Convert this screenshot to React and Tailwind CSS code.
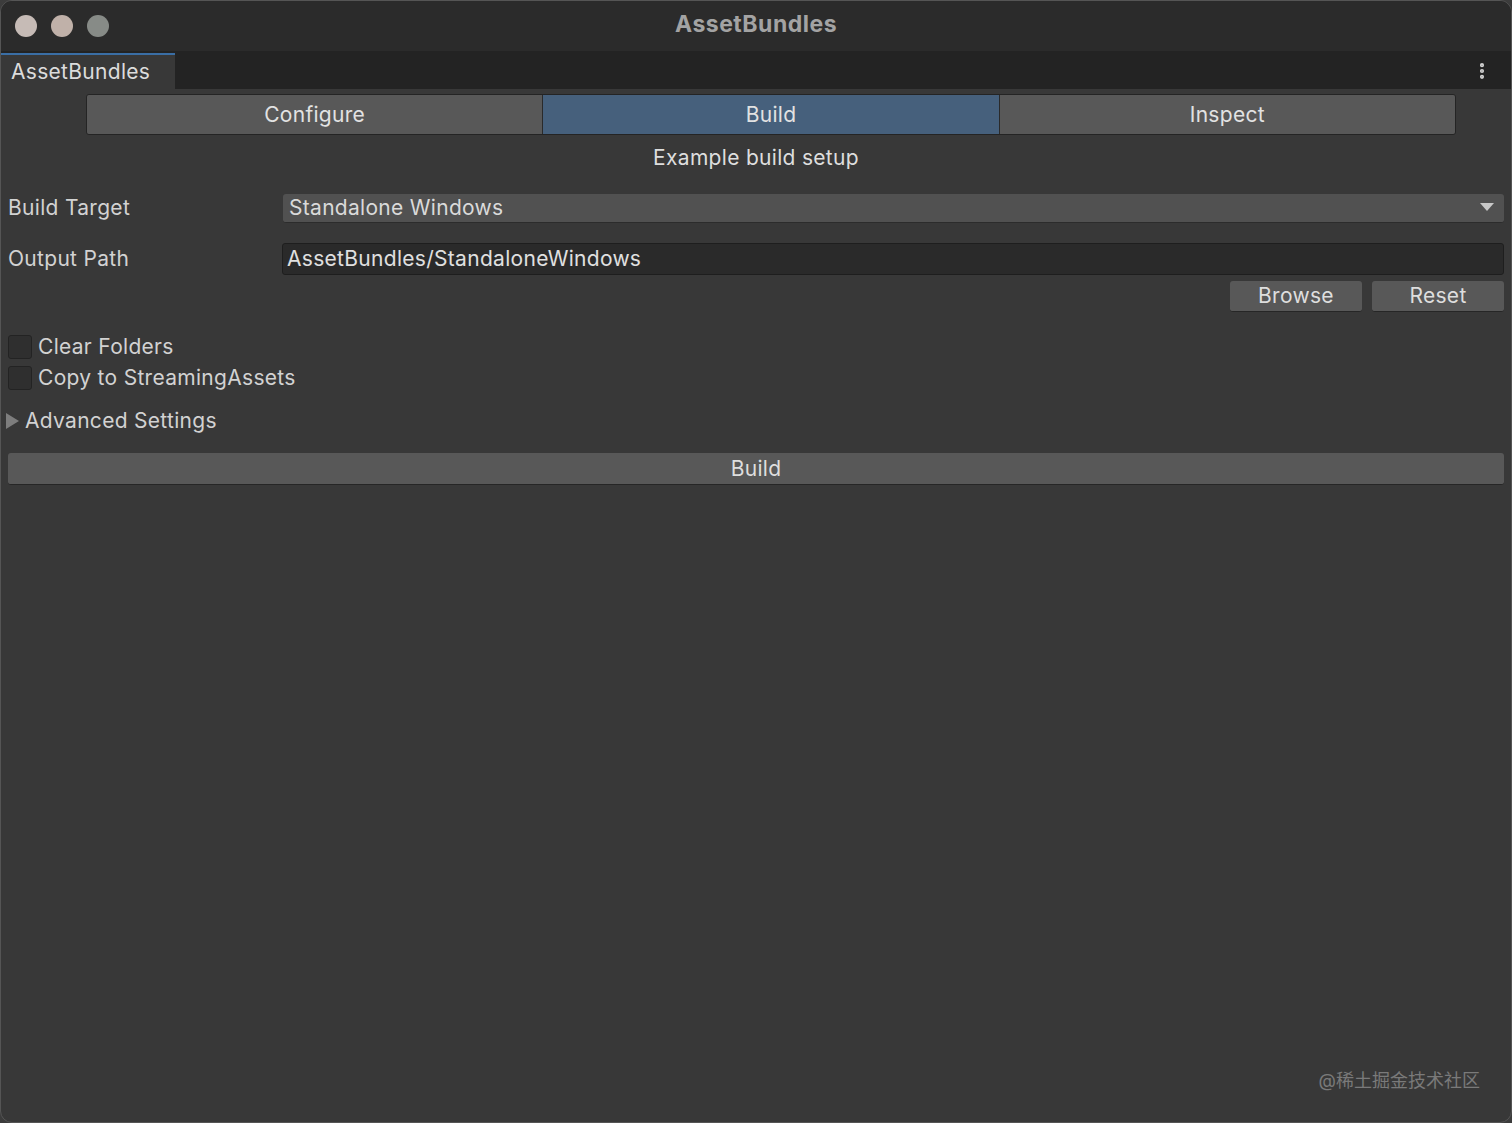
import { EllipsisVertical } from "lucide-react";

const tabs = ["Configure", "Build", "Inspect"];

const App = () => {
  return (
    <div
      className="h-[1123px] w-[1512px] overflow-hidden bg-[#3c3c3c]"
      style={{ fontFamily: "Inter, 'Noto Sans', sans-serif" }}
    >
      <div className="flex h-full flex-col overflow-hidden rounded-[12px] border border-[#555] bg-[#383838]">
        {/* title bar */}
        <div className="relative flex h-[50px] shrink-0 items-center bg-[#2b2b2b] px-[14px]">
          <div className="flex gap-[14px]">
            <span className="h-[22px] w-[22px] rounded-full bg-[#c6bbb6]" />
            <span className="h-[22px] w-[22px] rounded-full bg-[#c0b1a9]" />
            <span className="h-[22px] w-[22px] rounded-full bg-[#878b87]" />
          </div>
          <div className="absolute inset-0 flex items-center justify-center pb-[3px] text-[23px] font-bold tracking-[0.5px] text-[#a3a3a3]">
            AssetBundles
          </div>
        </div>

        {/* window tab strip */}
        <div className="flex h-[38px] shrink-0 items-stretch bg-[#232323] pt-[2px]">
          <div className="flex w-[174px] items-center border-t-2 border-[#3a6ea5] bg-[#383838] pl-[10px] text-[21px] tracking-[0.3px] text-[#dcdcdc]">
            AssetBundles
          </div>
          <div className="flex-1" />
          <div className="flex w-[58px] items-center justify-center text-[#d0d0d0]">
            <EllipsisVertical size={20} strokeWidth={3} />
          </div>
        </div>

        {/* content */}
        <div className="flex flex-1 flex-col px-[7px] pt-[5px] text-[21px] leading-[30px] tracking-[0.3px] text-[#d2d2d2]">
          <div className="ml-[78px] mr-[48px] flex h-[41px] overflow-hidden rounded-[3px] border border-[#242424]">
            {tabs.map((tab) => (
              <div
                key={tab}
                className={`flex flex-1 items-center justify-center border-r border-[#2a2a2a] text-[21px] text-[#e2e2e2] last:border-r-0 ${
                  tab === "Build" ? "bg-[#46607c]" : "bg-[#585858]"
                }`}
              >
                {tab}
              </div>
            ))}
          </div>

          <div className="mt-[8px] text-center text-[#dedede]">
            Example build setup
          </div>

          <div className="mt-[20px] flex h-[30px] items-center">
            <div className="w-[275px] shrink-0">Build Target</div>
            <div className="flex h-[29px] flex-1 items-center justify-between rounded-[3px] border-b border-[#2c2c2c] bg-[#515151] pl-[6px] pr-[10px] text-[#dadada]">
              <span>Standalone Windows</span>
              <svg width="14" height="9" viewBox="0 0 14 9">
                <path d="M0 0 L14 0 L7 8 Z" fill="#c8c8c8" />
              </svg>
            </div>
          </div>

          <div className="mt-[19px] flex h-[33px] items-center">
            <div className="w-[274px] shrink-0">Output Path</div>
            <div className="flex h-[32px] flex-1 items-center rounded-[3px] border border-[#1e1e1e] bg-[#2a2a2a] pl-[4px] text-[#e0e0e0]">
              AssetBundles/StandaloneWindows
            </div>
          </div>

          <div className="mt-[6px] flex justify-end gap-[10px]">
            <button className="flex h-[31px] w-[132px] items-center justify-center rounded-[3px] border-b border-[#262626] bg-[#585858] text-[#dedede]">
              Browse
            </button>
            <button className="flex h-[31px] w-[132px] items-center justify-center rounded-[3px] border-b border-[#262626] bg-[#585858] text-[#dedede]">
              Reset
            </button>
          </div>

          <div className="mt-[20px] flex h-[30px] items-center gap-[6px]">
            <span className="h-[24px] w-[24px] rounded-[3px] border border-[#232323] bg-[#2f2f2f]" />
            <span>Clear Folders</span>
          </div>
          <div className="mt-[1px] flex h-[30px] items-center gap-[6px]">
            <span className="h-[24px] w-[24px] rounded-[3px] border border-[#232323] bg-[#2f2f2f]" />
            <span>Copy to StreamingAssets</span>
          </div>

          <div className="mt-[13px] flex h-[30px] items-center gap-[5px]">
            <svg width="14" height="16" viewBox="0 0 14 16" className="-ml-[2px]">
              <path d="M0 0 L13 8 L0 16 Z" fill="#7d7d7d" />
            </svg>
            <span>Advanced Settings</span>
          </div>

          <button className="mt-[17px] flex h-[32px] w-full items-center justify-center rounded-[3px] border-b border-[#262626] bg-[#585858] text-[#dedede]">
            Build
          </button>

          <div className="flex-1" />
          <div
            className="mb-[26px] mr-[24px] text-right text-[18px] tracking-normal text-[#7a7a7a]"
            style={{ fontFamily: "Inter, 'Noto Sans CJK SC', sans-serif" }}
          >
            @稀土掘金技术社区
          </div>
        </div>
      </div>
    </div>
  );
};

export default App;
